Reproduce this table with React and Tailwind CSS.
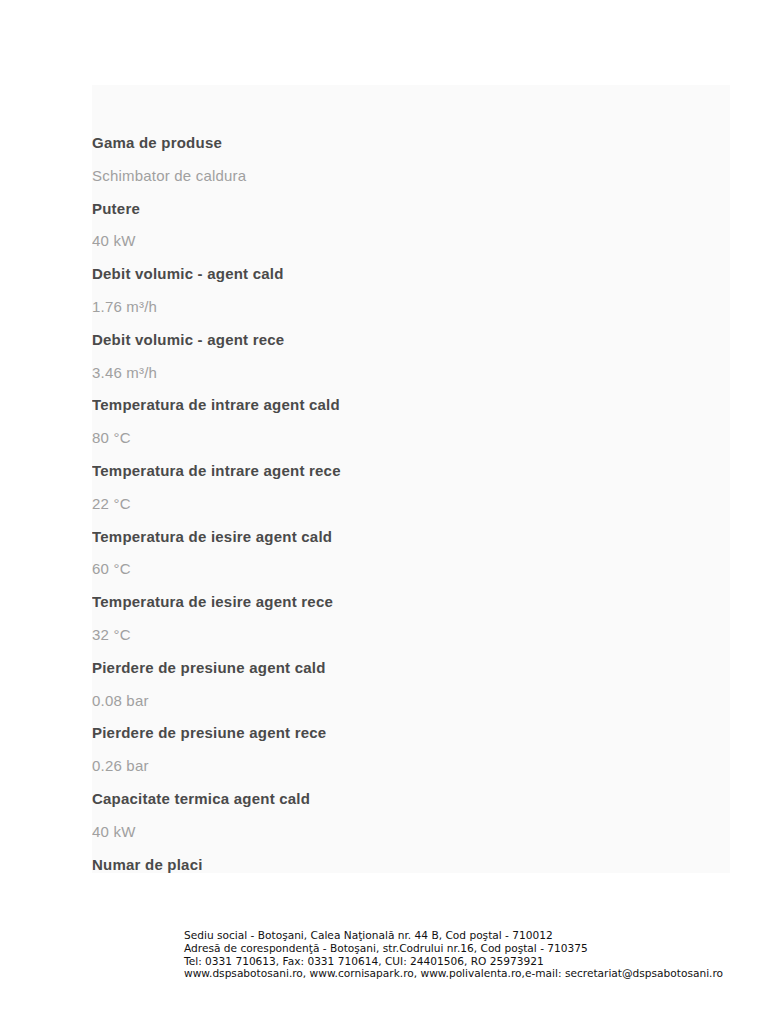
import React from 'react';

const specs = [
    ['Gama de produse', 'Schimbator de caldura'],
    ['Putere', '40 kW'],
    ['Debit volumic - agent cald', '1.76 m³/h'],
    ['Debit volumic - agent rece', '3.46 m³/h'],
    ['Temperatura de intrare agent cald', '80 °C'],
    ['Temperatura de intrare agent rece', '22 °C'],
    ['Temperatura de iesire agent cald', '60 °C'],
    ['Temperatura de iesire agent rece', '32 °C'],
    ['Pierdere de presiune agent cald', '0.08 bar'],
    ['Pierdere de presiune agent rece', '0.26 bar'],
    ['Capacitate termica agent cald', '40 kW'],
    ['Numar de placi', null],
];

const App = () => {
    return (
        <div className="w-[768px] min-h-[1024px] bg-white pt-[85px]" style={{ fontFamily: '"Liberation Sans", Arial, sans-serif' }}>
            <div className="ml-[92px] w-[638px] h-[788px] bg-[#fafafa] overflow-hidden pt-[42px]">
                {specs.map(([label, value], idx) => (
                    <div key={idx}>
                        <p className="leading-[32.8px] text-[15px] font-bold text-[#4a4a4a] tracking-[0.22px]">{label}</p>
                        {value && (
                            <p className="leading-[32.8px] text-[15px] text-[#a0a0a0] tracking-[0.2px]">{value}</p>
                        )}
                    </div>
                ))}
            </div>

            {/* Footer */}
            <div
                className="ml-[184px] mt-[56px] text-[10.6px] leading-[12.8px] text-[#111]"
                style={{ fontFamily: '"DejaVu Sans", Verdana, sans-serif' }}
            >
                <p>Sediu social - Botoşani, Calea Naţională nr. 44 B, Cod poştal - 710012</p>
                <p>Adresă de corespondenţă - Botoşani, str.Codrului nr.16, Cod poştal - 710375</p>
                <p>Tel: 0331 710613, Fax: 0331 710614, CUI: 24401506, RO 25973921</p>
                <p>www.dspsabotosani.ro, www.cornisapark.ro, www.polivalenta.ro,e-mail: secretariat@dspsabotosani.ro</p>
            </div>
        </div>
    );
};

export default App;
